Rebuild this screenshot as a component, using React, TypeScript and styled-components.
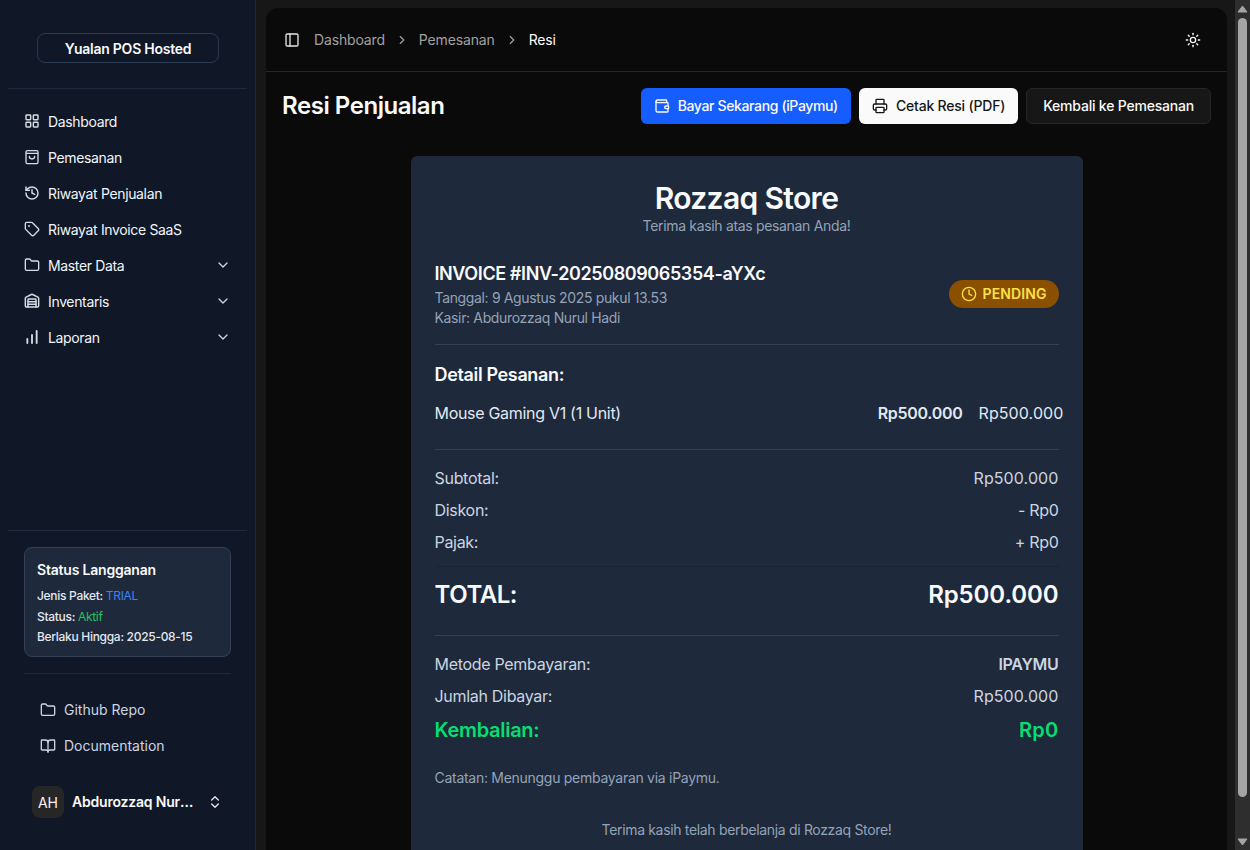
import React from "react";
import styled, { createGlobalStyle } from "styled-components";
import {
  BookOpen,
  ChartNoAxesColumnIncreasing,
  ChevronDown,
  ChevronRight,
  ChevronsUpDown,
  Clock,
  Folder,
  History,
  LayoutGrid,
  PanelLeft,
  Printer,
  Sun,
  Tag,
  Wallet,
  Warehouse,
} from "lucide-react";

const Global = createGlobalStyle`
  html, body {
    margin: 0;
    height: 100%;
    overflow: hidden;
    background: #171717;
  }
  body {
    color: #fafafa;
    font-family: Inter, "Noto Sans", sans-serif;
  }
  * { box-sizing: border-box; }
`;

const Shell = styled.div`
  display: flex;
  align-items: flex-start;
  height: 850px;
  overflow: hidden;
`;

const Sidebar = styled.aside`
  flex: 0 0 256px;
  height: 850px;
  display: flex;
  flex-direction: column;
  padding-bottom: 32px;
  background: #101828;
  border-right: 1px solid #262626;
`;

const Brand = styled.div`
  margin: 0 8px;
  padding: 33px 28px 25px 29px;
  border-bottom: 1px solid #1e293b;
`;

const BrandBox = styled.div`
  height: 30px;
  display: flex;
  align-items: center;
  justify-content: center;
  border: 1px solid #2a3a50;
  border-radius: 8px;
  font-size: 14px;
  font-weight: 600;
  letter-spacing: -0.25px;
  color: #f8fafc;
`;

const Nav = styled.nav`
  flex: 1;
  display: flex;
  flex-direction: column;
  padding: 14px 24px 0 24px;
`;

const NavRow = styled.div`
  height: 36px;
  display: flex;
  align-items: center;
  gap: 8px;
  font-size: 14px;
  letter-spacing: -0.35px;
  color: #f1f5f9;
  & > svg:first-child { color: #d5dbe3; flex: none; }
`;

const NavArrow = styled.span`
  margin-left: auto;
  display: flex;
  color: #cbd5e1;
`;

const SidebarBottom = styled.div`
  margin: 0 8px;
  padding: 16px 16px 0;
  border-top: 1px solid #1e293b;
`;

const StatusCard = styled.div`
  height: 110px;
  padding: 12px;
  background: #1e293b;
  border: 1px solid #334155;
  border-radius: 8px;
`;

const StatusTitle = styled.div`
  font-size: 14px;
  font-weight: 600;
  line-height: 20px;
  letter-spacing: -0.2px;
  color: #f8fafc;
  margin-bottom: 6px;
`;

const StatusLine = styled.div`
  font-size: 12px;
  font-weight: 500;
  line-height: 20.5px;
  letter-spacing: -0.3px;
  color: #e2e8f0;
`;

const Accent = styled.span<{ $color: string }>`
  font-weight: 400;
  color: ${(p) => p.$color};
`;

const BottomDivider = styled.div`
  height: 1px;
  background: #1e293b;
  margin-top: 16px;
  margin-bottom: 18px;
`;

const LinkRow = styled.div`
  height: 36px;
  display: flex;
  align-items: center;
  gap: 8px;
  padding: 0 0 1px 16px;
  font-size: 14px;
  color: #cbd5e1;
`;

const UserRow = styled.div`
  margin-top: 22px;
  display: flex;
  align-items: center;
  gap: 8px;
  padding-left: 8px;
`;

const Avatar = styled.div`
  width: 32px;
  height: 32px;
  border-radius: 8px;
  background: #262626;
  display: flex;
  align-items: center;
  justify-content: center;
  font-size: 14px;
  color: #f5f5f5;
`;

const UserName = styled.div`
  width: 124px;
  padding-bottom: 2px;
  font-size: 14px;
  font-weight: 600;
  letter-spacing: -0.2px;
  color: #fafafa;
  white-space: nowrap;
  overflow: hidden;
  text-overflow: ellipsis;
`;

const UserIcon = styled.span`
  display: flex;
  color: #e5e5e5;
  margin-left: 3px;
`;

const Main = styled.main`
  flex: 1;
  margin: 8px 8px 0 10px;
  height: 842px;
  overflow: hidden;
  background: #0a0a0a;
  border-radius: 12px 12px 0 0;
`;

const TopBar = styled.header`
  height: 64px;
  display: flex;
  align-items: center;
  padding: 0 26px 0 18px;
  border-bottom: 1px solid #262626;
`;

const Crumbs = styled.div`
  display: flex;
  align-items: center;
  gap: 10px;
  margin-left: 14px;
  font-size: 14px;
  letter-spacing: -0.15px;
  color: #a1a1a1;
`;

const CrumbSep = styled.span`
  display: flex;
  color: #a1a1a1;
`;

const CrumbNow = styled.span`
  color: #fafafa;
`;

const TopRight = styled.div`
  margin-left: auto;
  display: flex;
  color: #fafafa;
`;

const Content = styled.div`
  padding: 16px 16px 0;
`;

const TitleRow = styled.div`
  display: flex;
  align-items: center;
  justify-content: space-between;
`;

const PageTitle = styled.h1`
  margin: 0 0 1px;
  font-size: 24px;
  font-weight: 600;
  letter-spacing: -0.45px;
  color: #fafafa;
`;

const Actions = styled.div`
  display: flex;
  gap: 8px;
`;

const ActionButton = styled.button<{ $kind: "blue" | "white" | "dark" }>`
  height: 36px;
  padding: 0 ${(p) => (p.$kind === "dark" ? "16px" : "12px")} 1px;
  display: flex;
  align-items: center;
  gap: 8px;
  border-radius: 6px;
  font-family: inherit;
  font-size: 14px;
  font-weight: 500;
  letter-spacing: ${(p) => (p.$kind === "blue" ? "-0.36px" : "-0.2px")};
  border: 1px solid
    ${(p) => (p.$kind === "dark" ? "#262626" : "transparent")};
  background: ${(p) =>
    p.$kind === "blue" ? "#155dfc" : p.$kind === "white" ? "#fafafa" : "#171717"};
  color: ${(p) => (p.$kind === "white" ? "#171717" : "#fafafa")};
`;

const Receipt = styled.section`
  width: 672px;
  margin: 32px auto 0;
  padding: 24px;
  background: #1e293b;
  border-radius: 6px;
`;

const StoreName = styled.h2`
  margin: 0;
  text-align: center;
  font-size: 30px;
  line-height: 36px;
  font-weight: 600;
  letter-spacing: -0.65px;
  color: #f8fafc;
`;

const StoreSub = styled.p`
  margin: 0;
  text-align: center;
  font-size: 14px;
  line-height: 20px;
  letter-spacing: -0.33px;
  color: #94a3b8;
`;

const InvoiceHead = styled.div`
  margin-top: 24px;
  display: flex;
  align-items: center;
  justify-content: space-between;
  padding-bottom: 16px;
  border-bottom: 1px solid #334155;
`;

const InvoiceNo = styled.div`
  font-size: 18px;
  line-height: 28px;
  font-weight: 600;
  letter-spacing: -0.4px;
  color: #f8fafc;
`;

const Meta = styled.div`
  font-size: 14px;
  line-height: 20px;
  letter-spacing: -0.35px;
  color: #94a3b8;
`;

const Pill = styled.div`
  height: 28px;
  margin-bottom: 1px;
  padding: 0 12px;
  display: flex;
  align-items: center;
  gap: 6px;
  border-radius: 14px;
  background: #8a5000;
  color: #fde047;
  font-size: 14px;
  font-weight: 600;
  letter-spacing: 0.1px;
`;

const SectionTitle = styled.h3`
  margin: 16px 0 0;
  font-size: 18px;
  line-height: 28px;
  font-weight: 600;
  letter-spacing: -0.35px;
  color: #f8fafc;
`;

const ItemRow = styled.div`
  margin-top: 12px;
  height: 24px;
  display: flex;
  align-items: center;
  justify-content: space-between;
  font-size: 16px;
  letter-spacing: -0.3px;
  color: #e2e8f0;
`;

const ItemPrices = styled.div`
  display: flex;
  gap: 16px;
  margin-right: -5px;
`;

const Strong = styled.span`
  font-weight: 600;
`;

const Amount = styled.span`
  letter-spacing: 0.1px;
`;

const Group = styled.div<{ $tight?: boolean }>`
  margin-top: ${(p) => (p.$tight ? "13px" : "24px")};
  padding-top: 12px;
  border-top: 1px solid #334155;
`;

const Row = styled.div`
  height: 32px;
  display: flex;
  align-items: center;
  justify-content: space-between;
  font-size: 16px;
  letter-spacing: -0.3px;
  color: #cbd5e1;
`;

const TotalRow = styled.div`
  margin-top: 8px;
  height: 56px;
  border-top: 1px solid #1a2333;
  display: flex;
  align-items: center;
  justify-content: space-between;
  font-size: 24px;
  font-weight: 600;
  letter-spacing: -0.45px;
  color: #f8fafc;
`;

const TotalAmount = styled.span`
  letter-spacing: -0.1px;
`;

const ChangeRow = styled.div`
  height: 36px;
  display: flex;
  align-items: center;
  justify-content: space-between;
  font-size: 20px;
  font-weight: 600;
  letter-spacing: -0.3px;
  color: #05df72;
`;

const ChangeAmount = styled.span`
  letter-spacing: 0.3px;
`;

const Note = styled.p`
  margin: 20px 0 0;
  font-size: 14px;
  line-height: 20px;
  letter-spacing: -0.28px;
  color: #94a3b8;
`;

const Thanks = styled.p`
  margin: 32px 0 0;
  text-align: center;
  font-size: 14px;
  line-height: 20px;
  letter-spacing: -0.33px;
  color: #94a3b8;
`;

const ScrollBar = styled.div`
  flex: 0 0 15px;
  height: 850px;
  display: flex;
  flex-direction: column;
  align-items: center;
  background: #2e2e2e;
`;

const ScrollArrow = styled.div`
  flex: none;
  height: 17px;
  display: flex;
  align-items: center;
  justify-content: center;
`;

const ScrollTrack = styled.div`
  flex: 1;
  padding-top: 1px;
`;

const ScrollThumb = styled.div`
  width: 9px;
  height: 779px;
  border-radius: 5px;
  background: #a5a5a5;
`;

const BagIcon = () => (
  <svg width="16" height="16" viewBox="0 0 24 24" fill="none" stroke="currentColor" strokeWidth="2" strokeLinecap="round" strokeLinejoin="round">
    <path d="M5 2.5h14a2 2 0 0 1 2 2v15.5a2 2 0 0 1-2 2H5a2 2 0 0 1-2-2V4.500a2 2 0 0 1 2-2Z" />
    <path d="M3.500 6.500h17" />
    <path d="M8 11a4 4 0 0 0 8 0" />
  </svg>
);

const navItems: { label: string; icon: React.ReactNode; more?: boolean }[] = [
  { label: "Dashboard", icon: <LayoutGrid size={16} strokeWidth={2.2} /> },
  { label: "Pemesanan", icon: <BagIcon /> },
  { label: "Riwayat Penjualan", icon: <History size={16} strokeWidth={2.2} /> },
  { label: "Riwayat Invoice SaaS", icon: <Tag size={16} /> },
  { label: "Master Data", icon: <Folder size={16} />, more: true },
  { label: "Inventaris", icon: <Warehouse size={16} strokeWidth={2.2} />, more: true },
  { label: "Laporan", icon: <ChartNoAxesColumnIncreasing size={16} strokeWidth={2.8} />, more: true },
];

export default function App() {
  return (
    <Shell>
      <Global />
      <Sidebar>
        <Brand>
          <BrandBox>Yualan POS Hosted</BrandBox>
        </Brand>
        <Nav>
          {navItems.map((item) => (
            <NavRow key={item.label}>
              {item.icon}
              <span>{item.label}</span>
              {item.more && (
                <NavArrow>
                  <ChevronDown size={16} />
                </NavArrow>
              )}
            </NavRow>
          ))}
        </Nav>
        <SidebarBottom>
          <StatusCard>
            <StatusTitle>Status Langganan</StatusTitle>
            <StatusLine>
              Jenis Paket: <Accent $color="#3b82f6">TRIAL</Accent>
            </StatusLine>
            <StatusLine>
              Status: <Accent $color="#22c55e">Aktif</Accent>
            </StatusLine>
            <StatusLine>Berlaku Hingga: 2025-08-15</StatusLine>
          </StatusCard>
          <BottomDivider />
          <LinkRow>
            <Folder size={16} />
            Github Repo
          </LinkRow>
          <LinkRow>
            <BookOpen size={16} />
            Documentation
          </LinkRow>
          <UserRow>
            <Avatar>AH</Avatar>
            <UserName>Abdurozzaq Nurul Hadi</UserName>
            <UserIcon>
              <ChevronsUpDown size={16} />
            </UserIcon>
          </UserRow>
        </SidebarBottom>
      </Sidebar>
      <Main>
        <TopBar>
          <PanelLeft size={16} color="#e5e5e5" />
          <Crumbs>
            <span>Dashboard</span>
            <CrumbSep>
              <ChevronRight size={14} />
            </CrumbSep>
            <span>Pemesanan</span>
            <CrumbSep>
              <ChevronRight size={14} />
            </CrumbSep>
            <CrumbNow>Resi</CrumbNow>
          </Crumbs>
          <TopRight>
            <Sun size={16} />
          </TopRight>
        </TopBar>
        <Content>
          <TitleRow>
            <PageTitle>Resi Penjualan</PageTitle>
            <Actions>
              <ActionButton $kind="blue">
                <Wallet size={16} />
                Bayar Sekarang (iPaymu)
              </ActionButton>
              <ActionButton $kind="white">
                <Printer size={16} />
                Cetak Resi (PDF)
              </ActionButton>
              <ActionButton $kind="dark">Kembali ke Pemesanan</ActionButton>
            </Actions>
          </TitleRow>
          <Receipt>
            <StoreName>Rozzaq Store</StoreName>
            <StoreSub>Terima kasih atas pesanan Anda!</StoreSub>
            <InvoiceHead>
              <div>
                <InvoiceNo>INVOICE #INV-20250809065354-aYXc</InvoiceNo>
                <Meta>Tanggal: 9 Agustus 2025 pukul 13.53</Meta>
                <Meta>Kasir: Abdurozzaq Nurul Hadi</Meta>
              </div>
              <Pill>
                <Clock size={16} />
                PENDING
              </Pill>
            </InvoiceHead>
            <SectionTitle>Detail Pesanan:</SectionTitle>
            <ItemRow>
              <span>Mouse Gaming V1 (1 Unit)</span>
              <ItemPrices>
                <Strong>Rp500.000</Strong>
                <Amount>Rp500.000</Amount>
              </ItemPrices>
            </ItemRow>
            <Group>
              <Row>
                <span>Subtotal:</span>
                <Amount>Rp500.000</Amount>
              </Row>
              <Row>
                <span>Diskon:</span>
                <span>- Rp0</span>
              </Row>
              <Row>
                <span>Pajak:</span>
                <span>+ Rp0</span>
              </Row>
              <TotalRow>
                <span>TOTAL:</span>
                <TotalAmount>Rp500.000</TotalAmount>
              </TotalRow>
            </Group>
            <Group $tight>
              <Row>
                <span>Metode Pembayaran:</span>
                <Strong>IPAYMU</Strong>
              </Row>
              <Row>
                <span>Jumlah Dibayar:</span>
                <Amount>Rp500.000</Amount>
              </Row>
              <ChangeRow>
                <span>Kembalian:</span>
                <ChangeAmount>Rp0</ChangeAmount>
              </ChangeRow>
            </Group>
            <Note>Catatan: Menunggu pembayaran via iPaymu.</Note>
            <Thanks>Terima kasih telah berbelanja di Rozzaq Store!</Thanks>
          </Receipt>
        </Content>
      </Main>
      <ScrollBar>
        <ScrollArrow>
          <svg width="11" height="8" viewBox="0 0 11 8">
            <path d="M5.5 1 L10 7 L1 7 Z" fill="#a5a5a5" stroke="#a5a5a5" strokeLinejoin="round" />
          </svg>
        </ScrollArrow>
        <ScrollTrack>
          <ScrollThumb />
        </ScrollTrack>
        <ScrollArrow>
          <svg width="11" height="8" viewBox="0 0 11 8">
            <path d="M5.5 7 L10 1 L1 1 Z" fill="#a5a5a5" stroke="#a5a5a5" strokeLinejoin="round" />
          </svg>
        </ScrollArrow>
      </ScrollBar>
    </Shell>
  );
}
